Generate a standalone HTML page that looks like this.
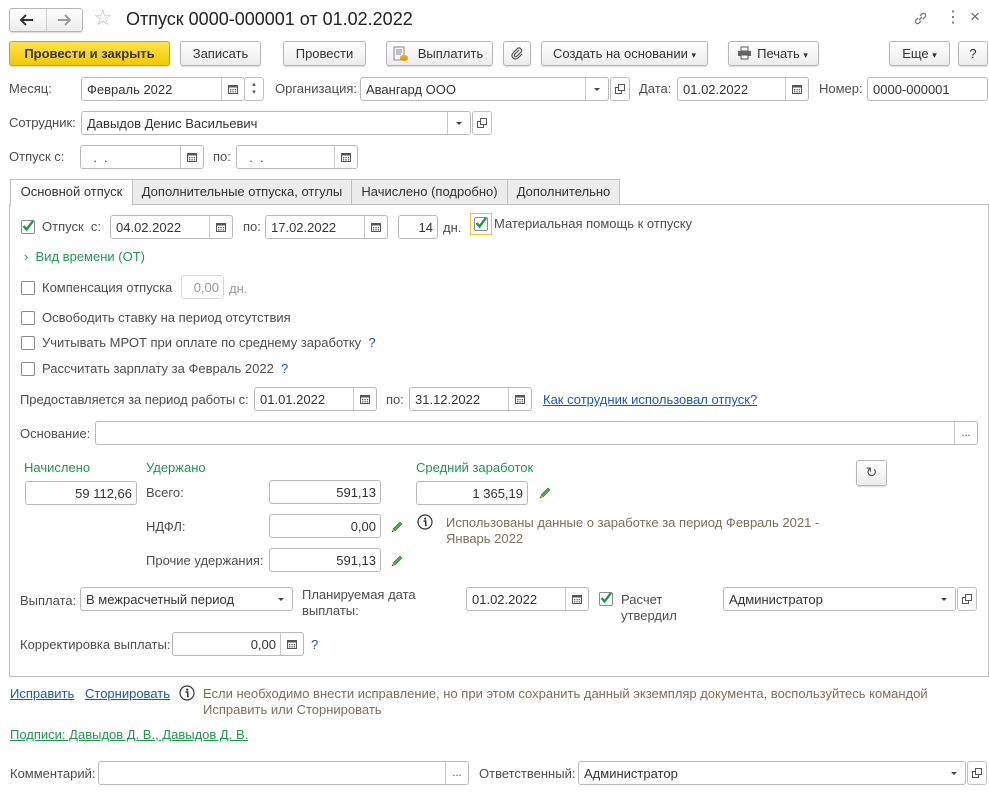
<!DOCTYPE html>
<html><head><meta charset="utf-8"><style>
body{margin:0;width:989px;height:795px;background:#fff;position:relative;overflow:hidden;font-family:"Liberation Sans",Arial,sans-serif;font-size:13px;color:#404040}
.t{position:absolute;line-height:16px;white-space:nowrap}
.g{color:#4d4d4d}
.in{position:absolute;box-sizing:border-box;height:24px;border:1px solid #b9b9b9;border-radius:3px;background:#fff;color:#333;line-height:23px;padding-left:5px;white-space:nowrap;overflow:hidden}
.r{text-align:right;padding-right:4px}
.bt{position:absolute;top:0;right:0;width:22px;height:22px;border-left:1px solid #c8c8c8;display:flex;align-items:center;justify-content:center}
.btn{position:absolute;box-sizing:border-box;height:25px;border:1px solid #b5b5b5;border-radius:3px;background:linear-gradient(#fff,#ececec);color:#333;text-align:center;line-height:23px;box-shadow:0 1px 1px rgba(0,0,0,.15);white-space:nowrap}
.sb{position:absolute;box-sizing:border-box;width:20px;height:24px;border:1px solid #c0c0c0;border-radius:3px;background:#fff;display:flex;align-items:center;justify-content:center}
.cb{position:absolute;box-sizing:border-box;width:14px;height:14px;border:1px solid #8a8a8a;border-radius:2px;background:#fff}
.green{color:#1a9a48}
.link{color:#1a57b8;text-decoration:underline}
.info{color:#7b6f57}
.tab{position:absolute;top:179px;height:26px;box-sizing:border-box;border:1px solid #c0c0c0;background:#ececec;line-height:24px;text-align:center;color:#333}
</style></head><body>
<svg width="0" height="0" style="position:absolute"><defs>
<symbol id="cal" viewBox="0 0 10 10"><rect x="0.5" y="1.5" width="9" height="8" fill="none" stroke="#555"/><rect x="0.5" y="1.5" width="9" height="2" fill="#555"/><g fill="#555"><rect x="2" y="5" width="1.3" height="1.3"/><rect x="4.4" y="5" width="1.3" height="1.3"/><rect x="6.8" y="5" width="1.3" height="1.3"/><rect x="2" y="7.2" width="1.3" height="1.3"/><rect x="4.4" y="7.2" width="1.3" height="1.3"/><rect x="6.8" y="7.2" width="1.3" height="1.3"/></g></symbol>
<symbol id="dd" viewBox="0 0 8 5"><path d="M1 1h6L4 4z" fill="#444"/></symbol>
<symbol id="op" viewBox="0 0 10 10"><rect x="0.5" y="3.5" width="6" height="6" fill="none" stroke="#555"/><rect x="3.5" y="0.5" width="6" height="6" fill="#fff" stroke="#555"/></symbol>
<symbol id="chk" viewBox="0 0 14 14"><path d="M2.5 7l3 3.5L12 2" fill="none" stroke="#1a9a48" stroke-width="2.4"/></symbol>
<symbol id="pen" viewBox="0 0 14 14"><path d="M3 9l7-7 2 2-7 7z" fill="#4caf50" stroke="#2d6e2f" stroke-width=".6"/><path d="M3 9l2 2-3 1z" fill="#e8a24a"/><path d="M1.6 12.4l.8-2 1.2 1.2z" fill="#333"/></symbol>
<symbol id="inf" viewBox="0 0 16 16"><circle cx="8" cy="8" r="7" fill="none" stroke="#333" stroke-width="1.2"/><circle cx="8.2" cy="4.6" r="1.1" fill="#333"/><path d="M6.5 7h2.2v4.5h1" fill="none" stroke="#333" stroke-width="1.5"/></symbol>
</defs></svg>

<!-- header -->
<div class="btn" style="left:9px;top:8px;width:74px;height:24px"></div>
<div style="position:absolute;left:46px;top:9px;width:1px;height:22px;background:#ccc"></div>
<svg style="position:absolute;left:20px;top:14px" width="14" height="12"><path d="M1 6h12M6 1L1 6l5 5" fill="none" stroke="#333" stroke-width="2"/></svg>
<svg style="position:absolute;left:57px;top:14px" width="14" height="12"><path d="M1 6h12M8 1l5 5-5 5" fill="none" stroke="#999" stroke-width="2"/></svg>
<div class="t" style="left:93px;top:10px;font-size:22px;color:#bbb">&#x2606;</div>
<div class="t" style="left:126px;top:9px;font-size:18px;line-height:20px;color:#222">Отпуск 0000-000001 от 01.02.2022</div>
<svg style="position:absolute;left:913px;top:11px" width="15" height="15" viewBox="0 0 15 15"><path d="M6 9l3-3M5 7L3 9a2 2 0 003 3l2-2M10 8l2-2a2 2 0 00-3-3L7 5" fill="none" stroke="#777" stroke-width="1.3"/></svg>
<div class="t" style="left:945px;top:10px;font-size:16px;color:#666">&#x22EE;</div>
<div class="t" style="left:970px;top:9px;font-size:17px;color:#666">&#x00D7;</div>

<!-- toolbar -->
<div class="btn" style="left:9px;top:41px;width:161px;background:linear-gradient(#ffe54a,#f3c800);border-color:#c9a800;font-weight:bold;color:#333">Провести и закрыть</div>
<div class="btn" style="left:180px;top:41px;width:81px">Записать</div>
<div class="btn" style="left:283px;top:41px;width:83px">Провести</div>
<div class="btn" style="left:386px;top:41px;width:107px;padding-left:22px">Выплатить</div>
<svg style="position:absolute;left:393px;top:46px" width="16" height="16"><rect x="1" y="1" width="10" height="13" fill="#f4f4f4" stroke="#889"/><path d="M3 4h6M3 6h6M3 8h5" stroke="#889"/><ellipse cx="11" cy="11" rx="4" ry="2" fill="#f0b400"/><ellipse cx="11" cy="13" rx="4" ry="2" fill="#e0a000"/></svg>
<div class="btn" style="left:503px;top:41px;width:28px"></div>
<svg style="position:absolute;left:510px;top:46px" width="14" height="14"><path d="M9 4L4.5 8.5a1.5 1.5 0 002 2L11 6a2.5 2.5 0 00-3.5-3.5L3 7a3.5 3.5 0 005 5l4-4" fill="none" stroke="#555" stroke-width="1.2"/></svg>
<div class="btn" style="left:541px;top:41px;width:167px">Создать на основании <span style="font-size:9px">&#x25BE;</span></div>
<div class="btn" style="left:728px;top:41px;width:91px;padding-left:18px">Печать <span style="font-size:9px">&#x25BE;</span></div>
<svg style="position:absolute;left:737px;top:46px" width="15" height="14"><rect x="4" y="1" width="7" height="4" fill="#fff" stroke="#555"/><rect x="1" y="5" width="13" height="5" fill="#666"/><rect x="4" y="9" width="7" height="4" fill="#fff" stroke="#555"/></svg>
<div class="btn" style="left:889px;top:41px;width:61px">Еще <span style="font-size:9px">&#x25BE;</span></div>
<div class="btn" style="left:958px;top:41px;width:30px">?</div>

<!-- row Месяц -->
<div class="t g" style="left:9px;top:81px">Месяц:</div>
<div class="in" style="left:81px;top:77px;width:164px">Февраль 2022<div class="bt"><svg width="10" height="10"><use href="#cal"/></svg></div></div>
<div class="sb" style="left:244px;top:77px;font-size:7px;line-height:8px;flex-direction:column;color:#555">▴<br>▾</div>
<div class="t g" style="left:275px;top:81px">Организация:</div>
<div class="in" style="left:360px;top:77px;width:249px">Авангард ООО<div class="bt"><svg width="8" height="5"><use href="#dd"/></svg></div></div>
<div class="sb" style="left:610px;top:77px"><svg width="10" height="10"><use href="#op"/></svg></div>
<div class="t g" style="left:639px;top:81px">Дата:</div>
<div class="in" style="left:677px;top:77px;width:132px">01.02.2022<div class="bt"><svg width="10" height="10"><use href="#cal"/></svg></div></div>
<div class="t g" style="left:819px;top:81px">Номер:</div>
<div class="in" style="left:867px;top:77px;width:121px">0000-000001</div>

<div class="t g" style="left:9px;top:115px">Сотрудник:</div>
<div class="in" style="left:81px;top:111px;width:390px">Давыдов Денис Васильевич<div class="bt"><svg width="8" height="5"><use href="#dd"/></svg></div></div>
<div class="sb" style="left:472px;top:111px"><svg width="10" height="10"><use href="#op"/></svg></div>

<div class="t g" style="left:9px;top:149px">Отпуск с:</div>
<div class="in" style="left:80px;top:145px;width:124px">&nbsp; . &nbsp;.<div class="bt"><svg width="10" height="10"><use href="#cal"/></svg></div></div>
<div class="t g" style="left:213px;top:149px">по:</div>
<div class="in" style="left:236px;top:145px;width:122px">&nbsp; . &nbsp;.<div class="bt"><svg width="10" height="10"><use href="#cal"/></svg></div></div>

<!-- tabs -->
<div style="position:absolute;left:9px;top:204px;width:980px;height:473px;box-sizing:border-box;border:1px solid #c0c0c0;background:#fff"></div>
<div class="tab" style="left:132px;width:220px">Дополнительные отпуска, отгулы</div>
<div class="tab" style="left:351px;width:157px">Начислено (подробно)</div>
<div class="tab" style="left:507px;width:113px">Дополнительно</div>
<div class="tab" style="left:10px;width:123px;background:#fff;border-bottom-color:#fff;height:27px">Основной отпуск</div>

<!-- row otpusk -->
<div class="cb" style="left:21px;top:220px"></div><svg style="position:absolute;left:21px;top:219px" width="14" height="14"><use href="#chk"/></svg>
<div class="t g" style="left:42px;top:219px">Отпуск &nbsp;с:</div>
<div class="in" style="left:110px;top:215px;width:123px">04.02.2022<div class="bt"><svg width="10" height="10"><use href="#cal"/></svg></div></div>
<div class="t g" style="left:243px;top:219px">по:</div>
<div class="in" style="left:265px;top:215px;width:123px">17.02.2022<div class="bt"><svg width="10" height="10"><use href="#cal"/></svg></div></div>
<div class="in r" style="left:398px;top:215px;width:40px">14</div>
<div class="t g" style="left:443px;top:220px">дн.</div>
<div style="position:absolute;left:470px;top:213px;width:22px;height:22px;box-sizing:border-box;border:1px solid #f2c230"></div>
<div class="cb" style="left:474px;top:217px"></div><svg style="position:absolute;left:474px;top:216px" width="14" height="14"><use href="#chk"/></svg>
<div class="t g" style="left:494px;top:216px">Материальная помощь к отпуску</div>

<div class="t green" style="left:24px;top:249px">&#x203A;&nbsp; Вид времени (ОТ)</div>

<div class="cb" style="left:21px;top:281px"></div>
<div class="t g" style="left:42px;top:280px">Компенсация отпуска</div>
<div class="in r" style="left:181px;top:275px;width:43px;color:#999;border-color:#d8d8d8">0,00</div>
<div class="t" style="left:229px;top:281px;color:#999">дн.</div>
<div class="cb" style="left:21px;top:311px"></div>
<div class="t g" style="left:42px;top:310px">Освободить ставку на период отсутствия</div>
<div class="cb" style="left:21px;top:336px"></div>
<div class="t g" style="left:42px;top:335px">Учитывать МРОТ при оплате по среднему заработку <span style="color:#1a57b8">&nbsp;?</span></div>
<div class="cb" style="left:21px;top:362px"></div>
<div class="t g" style="left:42px;top:361px">Рассчитать зарплату за Февраль 2022 <span style="color:#1a57b8">&nbsp;?</span></div>

<div class="t g" style="left:20px;top:392px;letter-spacing:-0.05px">Предоставляется за период работы с:</div>
<div class="in" style="left:254px;top:387px;width:123px">01.01.2022<div class="bt"><svg width="10" height="10"><use href="#cal"/></svg></div></div>
<div class="t g" style="left:386px;top:392px">по:</div>
<div class="in" style="left:409px;top:387px;width:123px">31.12.2022<div class="bt"><svg width="10" height="10"><use href="#cal"/></svg></div></div>
<div class="t link" style="left:543px;top:392px">Как сотрудник использовал отпуск?</div>

<div class="t g" style="left:20px;top:426px">Основание:</div>
<div class="in" style="left:95px;top:421px;width:883px"><div class="bt" style="font-size:11px;color:#444">...</div></div>

<div class="t green" style="left:24px;top:460px">Начислено</div>
<div class="t green" style="left:146px;top:460px">Удержано</div>
<div class="t green" style="left:416px;top:460px">Средний заработок</div>
<div class="in r" style="left:25px;top:481px;width:112px">59 112,66</div>
<div class="t g" style="left:146px;top:485px">Всего:</div>
<div class="in r" style="left:269px;top:480px;width:112px">591,13</div>
<div class="in r" style="left:416px;top:481px;width:112px">1 365,19</div>
<svg style="position:absolute;left:538px;top:486px" width="14" height="14"><use href="#pen"/></svg>
<div class="btn" style="left:856px;top:460px;width:31px;height:26px;font-size:14px;color:#555">&#x21BB;</div>
<div class="t g" style="left:146px;top:519px">НДФЛ:</div>
<div class="in r" style="left:269px;top:514px;width:112px">0,00</div>
<svg style="position:absolute;left:390px;top:520px" width="14" height="14"><use href="#pen"/></svg>
<svg style="position:absolute;left:417px;top:514px" width="16" height="16"><use href="#inf"/></svg>
<div class="t info" style="left:446px;top:515px">Использованы данные о заработке за период Февраль 2021 -</div>
<div class="t info" style="left:446px;top:531px">Январь 2022</div>
<div class="t g" style="left:146px;top:553px">Прочие удержания:</div>
<div class="in r" style="left:269px;top:548px;width:112px">591,13</div>
<svg style="position:absolute;left:390px;top:554px" width="14" height="14"><use href="#pen"/></svg>

<div class="t g" style="left:20px;top:593px">Выплата:</div>
<div class="in" style="left:80px;top:587px;width:213px">В межрасчетный период<div class="bt" style="border-left:none"><svg width="8" height="5"><use href="#dd"/></svg></div></div>
<div class="t g" style="left:302px;top:587px">Планируемая дата</div>
<div class="t g" style="left:302px;top:603px">выплаты:</div>
<div class="in" style="left:466px;top:587px;width:123px">01.02.2022<div class="bt"><svg width="10" height="10"><use href="#cal"/></svg></div></div>
<div class="cb" style="left:599px;top:592px"></div><svg style="position:absolute;left:599px;top:591px" width="14" height="14"><use href="#chk"/></svg>
<div class="t g" style="left:621px;top:592px">Расчет</div>
<div class="t g" style="left:621px;top:608px">утвердил</div>
<div class="in" style="left:723px;top:587px;width:233px">Администратор<div class="bt" style="border-left:none"><svg width="8" height="5"><use href="#dd"/></svg></div></div>
<div class="sb" style="left:957px;top:587px"><svg width="10" height="10"><use href="#op"/></svg></div>

<div class="t g" style="left:20px;top:637px">Корректировка выплаты:</div>
<div class="in r" style="left:172px;top:632px;width:132px;padding-right:27px">0,00<div class="bt"><svg width="10" height="10"><use href="#cal"/></svg></div></div>
<div class="t" style="left:311px;top:637px;color:#1a57b8">?</div>

<!-- footer -->
<div class="t link" style="left:10px;top:686px">Исправить</div>
<div class="t link" style="left:85px;top:686px">Сторнировать</div>
<svg style="position:absolute;left:179px;top:685px" width="16" height="16"><use href="#inf"/></svg>
<div class="t info" style="left:203px;top:686px">Если необходимо внести исправление, но при этом сохранить данный экземпляр документа, воспользуйтесь командой</div>
<div class="t info" style="left:203px;top:702px">Исправить или Сторнировать</div>
<div class="t" style="left:10px;top:727px;color:#1a9a48;text-decoration:underline">Подписи: Давыдов Д. В., Давыдов Д. В.</div>

<div class="t g" style="left:10px;top:766px">Комментарий:</div>
<div class="in" style="left:98px;top:761px;width:371px"><div class="bt" style="font-size:11px;color:#444">...</div></div>
<div class="t g" style="left:479px;top:766px">Ответственный:</div>
<div class="in" style="left:578px;top:761px;width:388px">Администратор<div class="bt" style="border-left:none"><svg width="8" height="5"><use href="#dd"/></svg></div></div>
<div class="sb" style="left:967px;top:761px"><svg width="10" height="10"><use href="#op"/></svg></div>
</body></html>
